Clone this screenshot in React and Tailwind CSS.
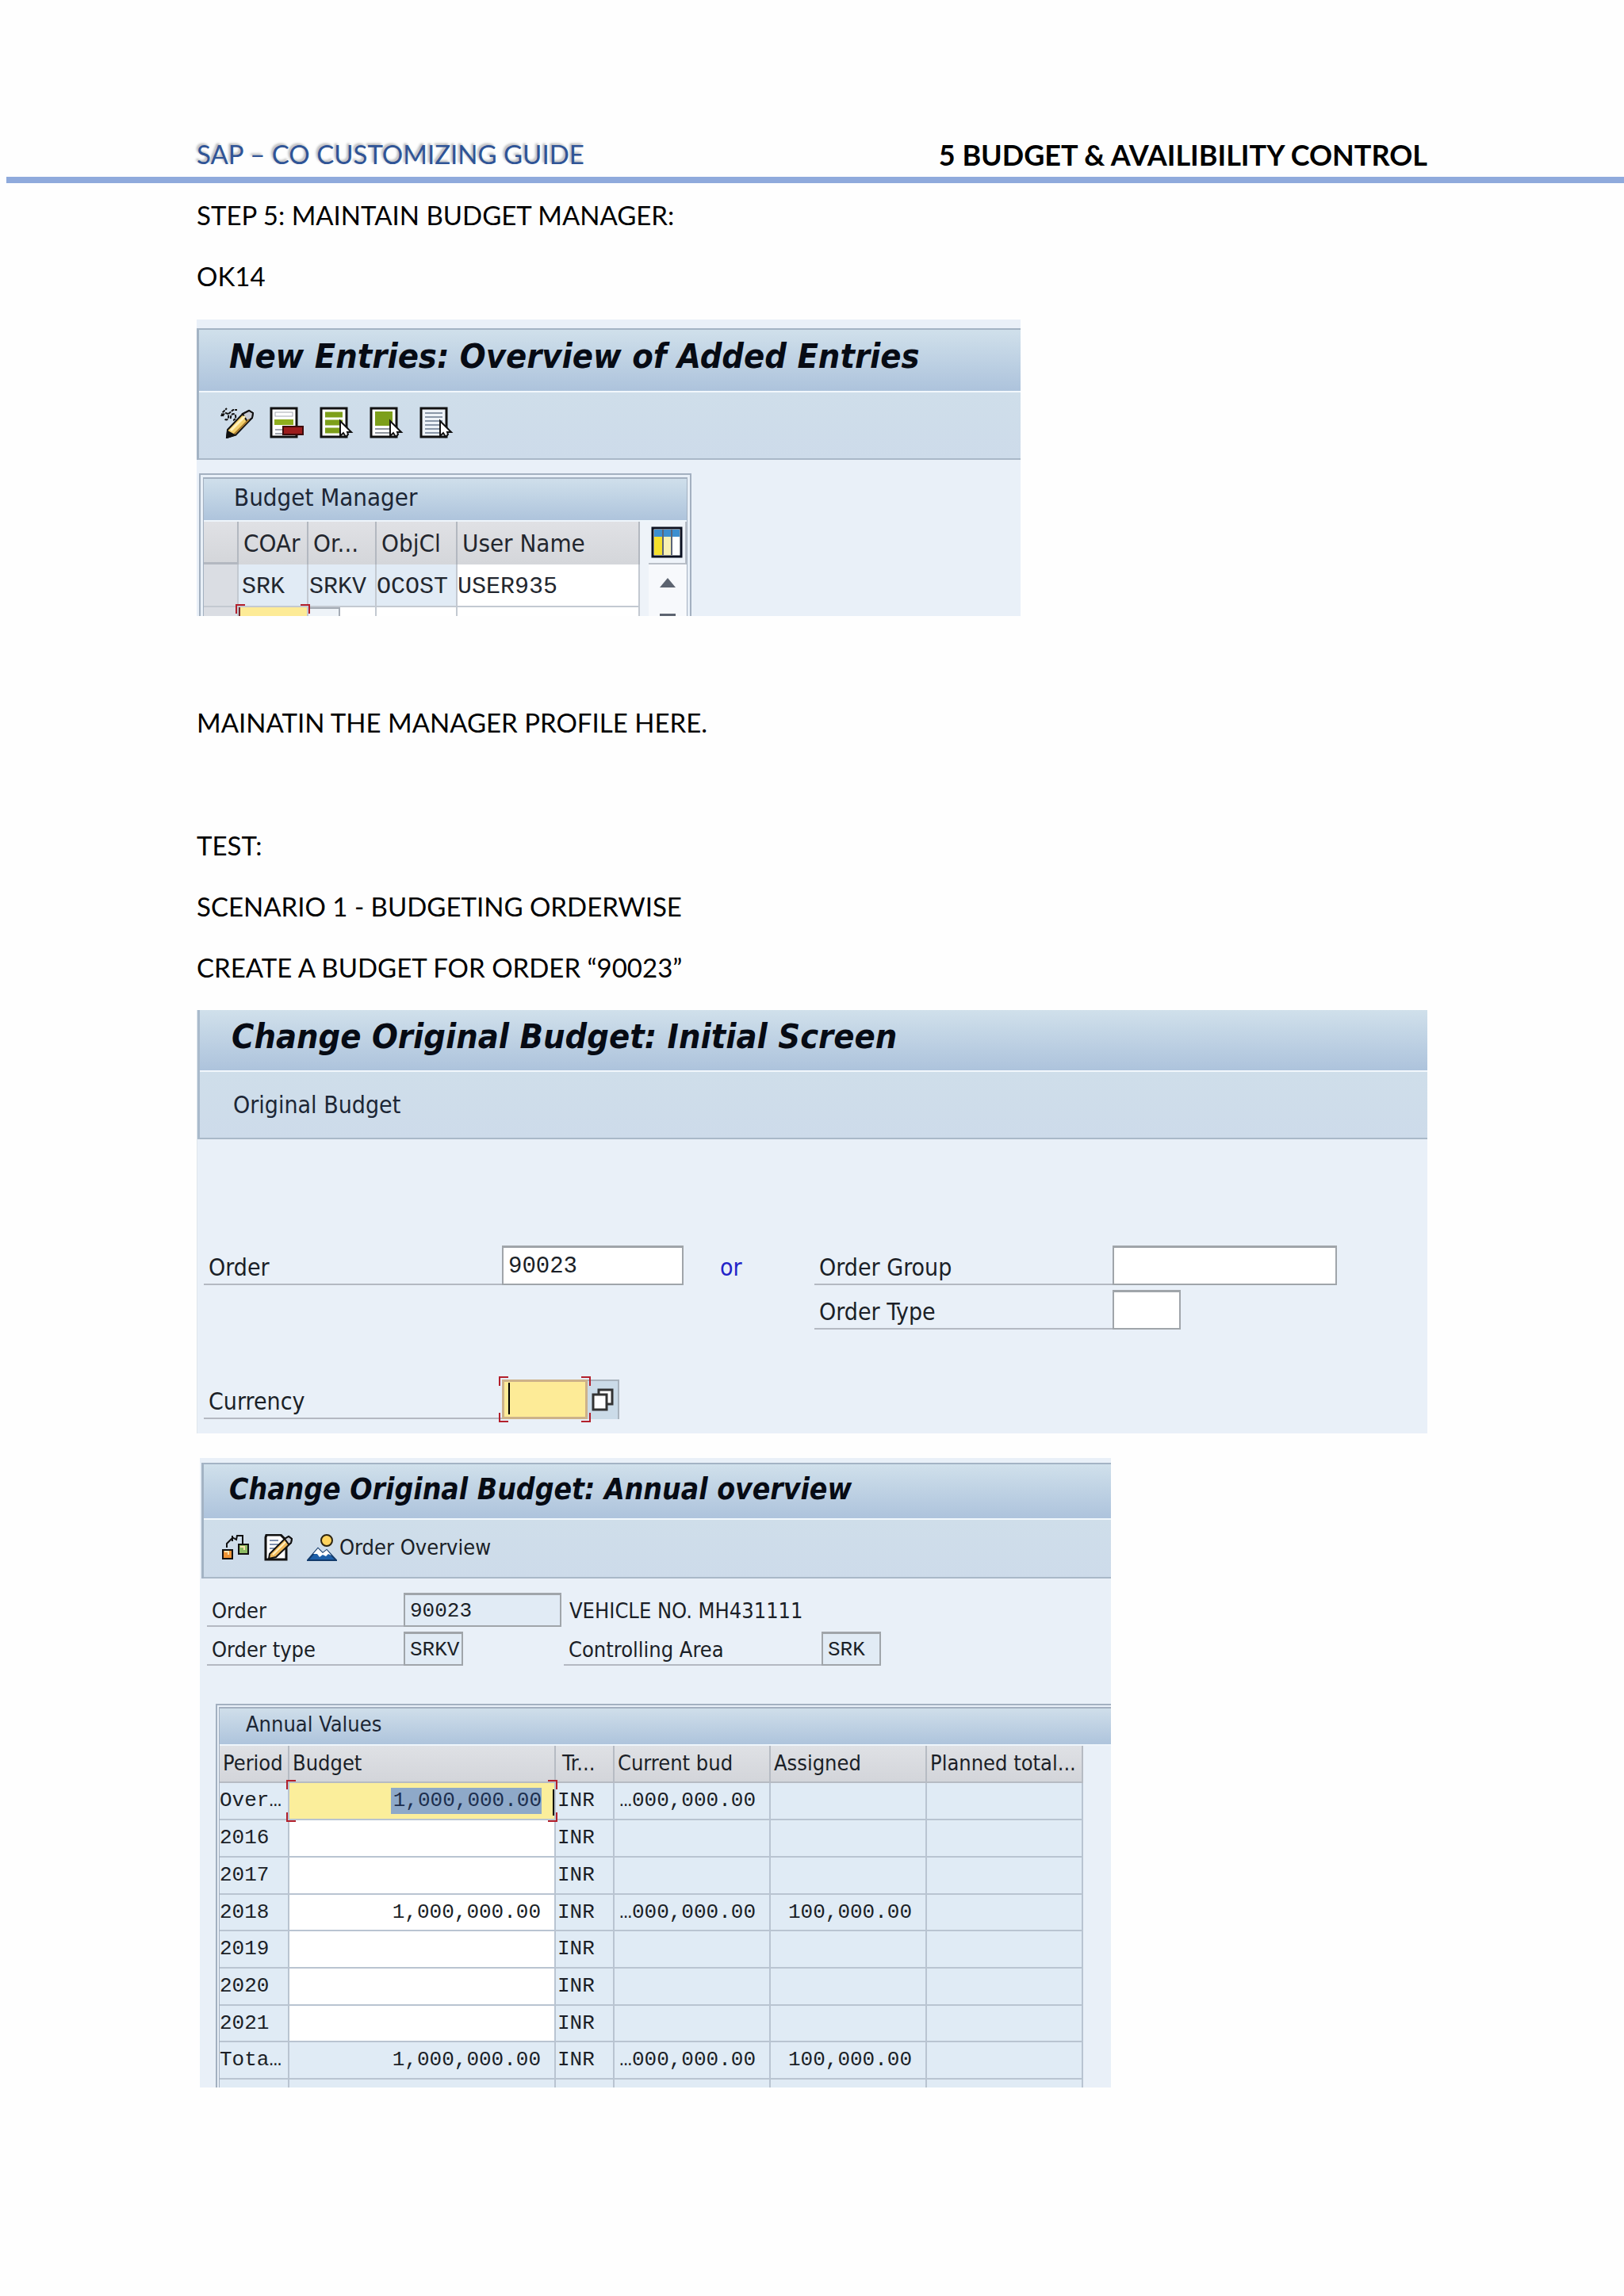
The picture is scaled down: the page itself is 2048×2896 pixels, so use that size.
const corner = 'absolute z-10 size-3 border-[#b3202c] pointer-events-none';

// Red brackets drawn around the field that has the focus
function FocusCorners() {
  return (
    <>
      <span className={`${corner} -top-1 -left-1 border-t-2 border-l-2`} />
      <span className={`${corner} -top-1 -right-1 border-t-2 border-r-2`} />
      <span className={`${corner} -bottom-1 -left-1 border-b-2 border-l-2`} />
      <span className={`${corner} -right-1 -bottom-1 border-r-2 border-b-2`} />
    </>
  );
}

function ChangeIcon() {
  return (
    <svg viewBox="0 0 43 40" className="h-10 w-[43px]" fill="none" stroke="#111" strokeWidth="2">
      <path d="M2 12 L4 7 L9 2 M4 12 C5 7 10 7 11 11 C12 16 8 18 6 15 M11 9 L17 4 L22 4 M14 15 C13 10 18 7 20 11 C21 14 19 17 17 17" strokeDasharray="4 1" />
      <path d="M10 29 L29 9 L37 5 L42 8 L41 14 L21 35 L9 39 Z" fill="#f3cf6b" />
      <path d="M29 9 L37 5 L42 8 L41 14 L35 19 Z" fill="#c9cdd6" />
      <path d="M14 30 L32 12" stroke="#fff2bd" strokeWidth="3" />
      <path d="M18 35 L37 16" stroke="#a7782c" />
      <path d="M10 31 L19 36 L9 39 Z" fill="#111" />
    </svg>
  );
}

function Pointer() {
  return <path d="M26 18 V37 L30 33 L33 38 L36 35 L35 32 H40 Z" fill="#fff" stroke="#111" strokeWidth="2" />;
}

function DeleteRowIcon() {
  return (
    <svg viewBox="0 0 43 40" className="h-10 w-[43px]">
      <rect x="2" y="2" width="32" height="36" fill="#fff" stroke="#111" strokeWidth="3" />
      <rect x="7" y="7" width="22" height="5" fill="#fff" stroke="#a3a8b0" />
      <rect x="6" y="16" width="24" height="7" fill="#8fae1e" />
      <path d="M7 29 H18 M7 34 H18" stroke="#a3a8b0" strokeWidth="2" />
      <rect x="17" y="25" width="25" height="10" fill="#9c1c1c" stroke="#3d0a0a" strokeWidth="2" />
    </svg>
  );
}

function SelectAllIcon() {
  return (
    <svg viewBox="0 0 43 40" className="h-10 w-[43px]">
      <rect x="2" y="2" width="32" height="36" fill="#fff" stroke="#111" strokeWidth="3" />
      <path d="M7 10 H29 M7 20 H29 M7 30 H27" stroke="#7d9f1a" strokeWidth="7" />
      <Pointer />
    </svg>
  );
}

function SelectBlockIcon() {
  return (
    <svg viewBox="0 0 43 40" className="h-10 w-[43px]">
      <rect x="2" y="2" width="32" height="36" fill="#fff" stroke="#111" strokeWidth="3" />
      <rect x="7" y="6" width="22" height="18" fill="#7d9f1a" />
      <path d="M7 28 H25 M7 33 H25" stroke="#8f959d" strokeWidth="2" />
      <Pointer />
    </svg>
  );
}

function DeselectIcon() {
  return (
    <svg viewBox="0 0 43 40" className="h-10 w-[43px]">
      <rect x="2" y="2" width="32" height="36" fill="#eef3f8" stroke="#111" strokeWidth="3" />
      <path d="M7 8 H29 M7 13 H29 M7 18 H29 M7 23 H25 M7 28 H25 M7 33 H25" stroke="#8a97a8" strokeWidth="2" />
      <Pointer />
    </svg>
  );
}

function LayoutIcon() {
  return (
    <svg viewBox="0 0 40 40" className="size-10">
      <rect x="2" y="2" width="36" height="36" fill="#fff" stroke="#0b1020" strokeWidth="3" />
      <rect x="4" y="4" width="32" height="9" fill="#3c8fd0" />
      <rect x="4" y="13" width="11" height="23" fill="#f5e02c" />
      <rect x="16" y="13" width="9" height="23" fill="#f7f0b4" />
      <path d="M15 4 V36 M26 4 V36" stroke="#5b6478" strokeWidth="2" />
    </svg>
  );
}

function HierarchyIcon() {
  return (
    <svg viewBox="0 0 36 34" className="h-[34px] w-9" fill="none" stroke="#111" strokeWidth="2">
      <path d="M7 17 V12 L14 5 M14 9 V2 M14 4 L19 7 L20 2 H27 V12" />
      <rect x="2" y="20" width="12" height="11" fill="#ee9436" />
      <rect x="22" y="13" width="12" height="12" fill="#8dbb62" />
      <path d="M4 22 H9 V26 M24 16 H29 V20" stroke="#f9e3ae" />
    </svg>
  );
}

function EditTextIcon() {
  return (
    <svg viewBox="0 0 36 34" className="h-[34px] w-9" stroke="#111" strokeWidth="2">
      <path d="M3 1 H21 L28 8 V32 H2 V4 Z" fill="#fff" strokeWidth="3" />
      <path d="M7 8 H18 M7 13 H18 M7 18 H14" stroke="#7d8fae" />
      <path d="M7 25 L26 6 L31 3 L35 6 L34 11 L15 29 L6 31 Z" fill="#f0b95a" />
      <path d="M26 6 L31 3 L35 6 L34 11 L31 13 Z" fill="#c9cdd6" />
      <path d="M11 26 L27 10" stroke="#fff0c2" />
    </svg>
  );
}

function OverviewIcon() {
  return (
    <svg viewBox="0 0 38 34" className="h-[34px] w-[38px]">
      <circle cx="25" cy="8" r="7" fill="#ffd45e" stroke="#2c2410" strokeWidth="2" />
      <path d="M1 33 L14 18 L20 24 L25 20 L37 33 Z" fill="#1d5fa8" stroke="#123a6b" strokeWidth="2" />
      <path d="M8 25 L14 18 L20 24 L25 20 L31 27 L27 25 L24 28 L20 26 L16 29 L13 25 Z" fill="#fff" />
    </svg>
  );
}

function MatchcodeIcon() {
  return (
    <svg viewBox="0 0 30 30" className="size-[30px]" fill="#fff" stroke="#333" strokeWidth="3">
      <rect x="10" y="2" width="17" height="18" />
      <rect x="3" y="8" width="17" height="19" />
    </svg>
  );
}

function TitleBar({ children, className }) {
  return (
    <h2 className={`flex items-center border-b-2 border-[#f1f7fc] bg-linear-to-b from-[#d0e0eb] to-[#adc3dc] font-bold whitespace-nowrap text-[#070b14] italic ${className}`}>
      {children}
    </h2>
  );
}

function Toolbar({ children, className }) {
  return (
    <div className={`flex items-center border-b-2 border-[#a9b8c8] bg-linear-to-b from-[#cfdeea] to-[#cddbea] ${className}`}>
      {children}
    </div>
  );
}

function Field({ id, label, width, labelWidth, className = '', ...rest }) {
  return (
    <div className="flex">
      <label htmlFor={id} className={`flex items-end border-b-2 border-[#b4b9c2] pl-[6px] whitespace-nowrap ${labelWidth}`}>
        {label}
      </label>
      <input
        id={id}
        className={`border-2 border-t-3 border-[#a0a5aa] pt-[2px] pl-[6px] font-['Liberation_Mono',monospace] outline-none ${width} ${className}`}
        {...rest}
      />
    </div>
  );
}

function BudgetManager() {
  const th = 'border-r-2 border-[#b3b8c0] bg-linear-to-b from-[#e0e1e5] to-[#d4d6da] pl-[6px] text-left font-normal';
  const td = 'border-r-2 border-b-2 border-[#c3c9d1] p-0';
  return (
    <section className="mt-4 w-[1039px] max-w-full overflow-hidden bg-[#e9f0f8] pt-[11px] text-[31px]">
      <div className="border-t-2 border-l-3 border-[#a3b3c4]">
        <TitleBar className="h-[79px] pb-[10px] pl-[38px] text-[43px]">New Entries: Overview of Added Entries</TitleBar>
        <Toolbar className="h-[85px] gap-5 pb-2 pl-[26px]">
          <button type="button" aria-label="Display/Change"><ChangeIcon /></button>
          <button type="button" aria-label="Delete"><DeleteRowIcon /></button>
          <button type="button" aria-label="Select all"><SelectAllIcon /></button>
          <button type="button" aria-label="Select block"><SelectBlockIcon /></button>
          <button type="button" aria-label="Deselect all"><DeselectIcon /></button>
        </Toolbar>
      </div>
      <div className="mt-[17px] ml-[3px] w-[621px] border-2 border-b-0 border-[#a3b0c0] px-[3px] pt-[3px]">
        <div className="border-x border-t-2 border-[#a3b0c0]">
          <h3 className="flex h-[54px] items-center border-b-2 border-[#eef5fb] bg-linear-to-b from-[#cfdfeb] to-[#aec4dc] pb-[6px] pl-[38px] text-[#1c2635]">
            Budget Manager
          </h3>
          <div className="flex h-[119px] overflow-hidden">
            <table className="w-[550px] shrink-0 table-fixed border-separate border-spacing-0 text-[#22262e]">
              <colgroup>
                <col className="w-[44px]" />
                <col className="w-[88px]" />
                <col className="w-[86px]" />
                <col className="w-[102px]" />
                <col className="w-[230px]" />
              </colgroup>
              <thead>
                <tr className="h-[54px]">
                  <th className={`${th} border-b-3`}></th>
                  <th className={th}>COAr</th>
                  <th className={th}>Or...</th>
                  <th className={th}>ObjCl</th>
                  <th className={th}>User Name</th>
                </tr>
              </thead>
              <tbody className="font-['Liberation_Mono',monospace] text-[30px]">
                <tr className="h-[54px]">
                  <td className={`${td} bg-[#dadde3]`}></td>
                  <td className={`${td} bg-[#e1ebf5] pt-1 pl-1`}>SRK</td>
                  <td className={`${td} bg-[#e1ebf5] pt-1 pl-px`}>SRKV</td>
                  <td className={`${td} bg-[#e1ebf5] pt-1`}>OCOST</td>
                  <td className={`${td} bg-white pt-1`}>
                    <input aria-label="User Name" defaultValue="USER935" className="block w-full outline-none" />
                  </td>
                </tr>
                <tr className="h-12">
                  <td className={`${td} bg-[#dadde3]`}></td>
                  <td className={`${td} bg-white`}>
                    <div className="relative h-12">
                      <FocusCorners />
                      <input aria-label="COAr" className="h-full w-full border-l-2 border-[#7b2b2b] bg-[#fdeb97] outline-none" />
                    </div>
                  </td>
                  <td className={`${td} bg-white`}>
                    <div className="h-12 w-[40px] border-t-2 border-r-2 border-[#a5acb5] bg-[#eef3f8]" />
                  </td>
                  <td className={`${td} bg-white`}></td>
                  <td className={`${td} bg-white`}></td>
                </tr>
              </tbody>
            </table>
            <div className="flex grow flex-col items-end bg-[#eef3f9]">
              <button type="button" aria-label="Configuration" className="flex h-[54px] w-12 items-center justify-center border-r-2 border-b-2 border-[#b9bfc8]">
                <LayoutIcon />
              </button>
              <button type="button" aria-label="Scroll up" className="flex h-[53px] w-12 items-center justify-center bg-[#f7f9fc] pb-2">
                <svg viewBox="0 0 20 12" className="h-3 w-5"><path d="M10 0 L20 12 H0 Z" fill="#5d6470" /></svg>
              </button>
              <button type="button" aria-label="Scroll down" className="flex h-3 w-12 items-end justify-center bg-[#f7f9fc]">
                <svg viewBox="0 0 20 3" className="h-[3px] w-5"><path d="M0 0 H20 V3 H0 Z" fill="#5d6470" /></svg>
              </button>
            </div>
          </div>
        </div>
      </div>
    </section>
  );
}

function InitialScreen() {
  return (
    <section className="mt-[15px] overflow-hidden border-l border-[#dfe6ec] bg-[#e9f0f8] text-[30px] text-[#1b1f27]">
      <div className="border-l-3 border-[#a9bacb]">
        <TitleBar className="h-[78px] pb-[10px] pl-[40px] text-[43px]">Change Original Budget: Initial Screen</TitleBar>
        <Toolbar className="h-[85px] pl-[42px]">
          <button type="button" className="text-[#1c2635]">Original Budget</button>
        </Toolbar>
      </div>
      <div className="px-2 pt-[134px] pb-[18px] leading-10">
        <div className="flex">
          <div className="flex h-[50px] w-[770px] shrink-0">
            <Field id="order" label="Order" labelWidth="w-[376px]" width="w-[229px]" className="bg-white text-[29px]" defaultValue="90023" />
            <span className="ml-[46px] self-end pb-[2px] text-[#2323c8]">or</span>
          </div>
          <div className="flex flex-col gap-[6px]">
            <div className="flex h-[50px]">
              <Field id="group" label="Order Group" labelWidth="w-[376px]" width="w-[283px]" className="bg-white" />
            </div>
            <div className="flex h-[50px]">
              <Field id="type" label="Order Type" labelWidth="w-[376px]" width="w-[86px]" className="bg-white" />
            </div>
          </div>
        </div>
        <div className="mt-[63px] flex h-[50px]">
          <label htmlFor="currency" className="flex w-[376px] items-end border-b-2 border-[#b4b9c2] pl-[6px]">Currency</label>
          <div className="relative flex w-[108px]">
            <FocusCorners />
            <input id="currency" className="w-full border-3 border-[#cdb28a] bg-[#fdeb97] outline-none" />
            <span className="absolute top-1 left-2 h-10 w-[2px] bg-black" />
          </div>
          <button type="button" aria-label="Possible entries" className="flex w-10 items-center justify-center border-t-2 border-r-2 border-[#a9b3bd] bg-[#cbdbe8]">
            <MatchcodeIcon />
          </button>
        </div>
      </div>
    </section>
  );
}

const years = [
  { period: 'Over…', budget: '1,000,000.00', current: '…000,000.00', assigned: '' },
  { period: '2016', budget: '', current: '', assigned: '' },
  { period: '2017', budget: '', current: '', assigned: '' },
  { period: '2018', budget: '1,000,000.00', current: '…000,000.00', assigned: '100,000.00' },
  { period: '2019', budget: '', current: '', assigned: '' },
  { period: '2020', budget: '', current: '', assigned: '' },
  { period: '2021', budget: '', current: '', assigned: '' },
  { period: 'Tota…', budget: '1,000,000.00', current: '…000,000.00', assigned: '100,000.00' },
];

function BudgetCell({ row, index }) {
  if (index === 0) {
    return (
      <div className="relative flex h-[45px] items-center justify-end bg-[#fbee9b] pr-4">
        <FocusCorners />
        <input
          aria-label="Budget overall"
          defaultValue={row.budget}
          className="h-[33px] w-[190px] bg-[#8ea9c9] text-right text-[#1d2f4f] outline-none"
        />
        <span className="absolute top-2 right-0 h-[33px] w-[2px] bg-black" />
      </div>
    );
  }
  if (row.period === 'Tota…') {
    return <div className="pr-[17px] text-right">{row.budget}</div>;
  }
  return (
    <input
      aria-label={`Budget ${row.period}`}
      defaultValue={row.budget}
      className="block h-full w-full bg-white pr-[17px] text-right outline-none"
    />
  );
}

function AnnualOverview() {
  const th = 'border-r-2 border-b-2 border-[#b6bbc3] bg-linear-to-b from-[#dfe1e5] to-[#d3d5da] p-0 pl-1 text-left font-normal whitespace-nowrap';
  const td = 'border-r-2 border-b-2 border-[#b9c4d1] p-0';
  return (
    <section className="mt-[31px] ml-1 w-[1149px] max-w-full overflow-hidden bg-[#e9f0f8] pt-[6px] text-[27px] text-[#1b1f27]">
      <div className="ml-[2px] border-t-2 border-l-3 border-[#a3b3c4]">
        <TitleBar className="h-[70px] pb-[4px] pl-[32px] text-[37px]">Change Original Budget: Annual overview</TitleBar>
        <Toolbar className="h-[74px] gap-[18px] pb-[2px] pl-[22px]">
          <button type="button" aria-label="Hierarchy"><HierarchyIcon /></button>
          <button type="button" aria-label="Edit text"><EditTextIcon /></button>
          <button type="button" className="flex items-center gap-[3px]">
            <OverviewIcon />
            Order Overview
          </button>
        </Toolbar>
      </div>
      <div className="flex flex-col gap-[6px] px-[9px] pt-[18px] leading-9">
        <div className="flex h-[43px]">
          <Field id="order2" label="Order" labelWidth="w-[248px]" width="w-[199px]" className="bg-[#e1ebf5] text-[26px]" defaultValue="90023" readOnly />
          <span className="ml-[10px] self-end pb-[2px]">VEHICLE NO. MH431111</span>
        </div>
        <div className="flex h-[43px]">
          <div className="flex w-[450px]">
            <Field id="type2" label="Order type" labelWidth="w-[248px]" width="w-[75px]" className="bg-[#e1ebf5] text-[26px]" defaultValue="SRKV" readOnly />
          </div>
          <Field id="area" label="Controlling Area" labelWidth="w-[325px]" width="w-[75px]" className="bg-[#e1ebf5] text-[26px]" defaultValue="SRK" readOnly />
        </div>
      </div>
      <div className="mt-12 ml-5 border-t-2 border-l-2 border-[#a3b0c0] pt-[2px] pl-[2px]">
        <div className="border-t-2 border-l border-[#a3b0c0]">
          <h3 className="flex h-[47px] items-center border-b-2 border-[#eef5fb] bg-linear-to-b from-[#cfdeea] to-[#aec4dc] pb-1 pl-[33px] text-[#1c2635]">
            Annual Values
          </h3>
          <div className="h-[431px] overflow-hidden">
            <table className="w-[1089px] table-fixed border-separate border-spacing-0">
              <colgroup>
                <col className="w-[88px]" />
                <col className="w-[336px]" />
                <col className="w-[74px]" />
                <col className="w-[197px]" />
                <col className="w-[197px]" />
                <col className="w-[197px]" />
              </colgroup>
              <thead>
                <tr className="h-[47px]">
                  <th className={th}>Period</th>
                  <th className={th}>Budget</th>
                  <th className={`${th} pl-2`}>Tr...</th>
                  <th className={th}>Current bud</th>
                  <th className={th}>Assigned</th>
                  <th className={th}>Planned total...</th>
                </tr>
              </thead>
              <tbody className="bg-[#e0ebf5] font-['Liberation_Mono',monospace] text-[26px]">
                {years.map((row, i) => (
                  <tr key={row.period} className={i % 3 ? 'h-[47px]' : 'h-[46px]'}>
                    <td className={td}>{row.period}</td>
                    <td className={`${td} h-px`}><BudgetCell row={row} index={i} /></td>
                    <td className={`${td} pl-[2px]`}>INR</td>
                    <td className={`${td} pr-[17px] text-right`}>{row.current}</td>
                    <td className={`${td} pr-[17px] text-right`}>{row.assigned}</td>
                    <td className={td}></td>
                  </tr>
                ))}
                <tr className="h-5">
                  <td className={td}></td>
                  <td className={td}></td>
                  <td className={td}></td>
                  <td className={td}></td>
                  <td className={td}></td>
                  <td className={td}></td>
                </tr>
              </tbody>
            </table>
          </div>
        </div>
      </div>
    </section>
  );
}

export default function App() {
  return (
    <div className="min-h-screen bg-[#fefefe] pb-16 font-['DejaVu_Sans_Condensed','DejaVu_Sans',sans-serif]">
      <header className="ml-2 border-b-8 border-[#8faadc] pt-[170px] pr-[248px] pl-[240px] font-['Lato',sans-serif]">
        <div className="flex h-[53px] items-center justify-between pb-1">
          <span className="text-[33px] text-[#2f5496] [text-shadow:-2px_-2px_3px_rgba(0,0,0,0.3)]">SAP – CO CUSTOMIZING GUIDE</span>
          <h1 className="text-[36px] font-bold text-black">5 BUDGET &amp; AVAILIBILITY CONTROL</h1>
        </div>
      </header>
      <main className="px-[248px] pt-[2px]">
        <div className="font-['Lato',sans-serif] text-[33px] leading-[77px] text-black">
          <p>STEP 5: MAINTAIN BUDGET MANAGER:</p>
          <p>OK14</p>
        </div>
        <BudgetManager />
        <div className="pt-24 font-['Lato',sans-serif] text-[33px] leading-[77px] text-black">
          <p>MAINATIN THE MANAGER PROFILE HERE.</p>
          <p className="pt-[78px]">TEST:</p>
          <p>SCENARIO 1 - BUDGETING ORDERWISE</p>
          <p>CREATE A BUDGET FOR ORDER “90023”</p>
        </div>
        <InitialScreen />
        <AnnualOverview />
      </main>
    </div>
  );
}
